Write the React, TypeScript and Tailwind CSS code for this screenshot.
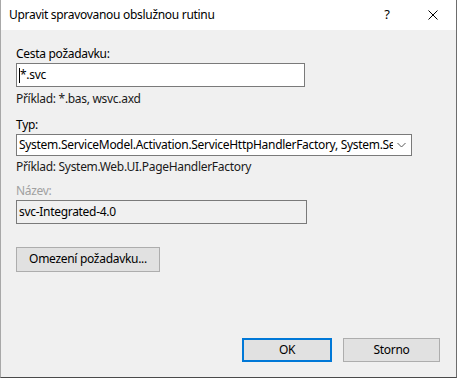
import React from 'react';

const font = { fontFamily: '"Noto Sans", "Open Sans", sans-serif' };

const Label: React.FC<{ text: string; muted?: boolean }> = ({ text, muted }) => (
  <div className={`h-[15px] leading-[15px] ${muted ? 'text-[#a0a0a0]' : 'text-black'}`}>{text}</div>
);

const App: React.FC = () => {
  return (
    <div
      className="w-[457px] h-[378px] flex flex-col bg-[#f0f0f0] border-l border-r border-b border-l-[#a8a8a8] border-r-[#6d6d6d] border-b-[#4a4a4a] text-[12px] tracking-[-0.3px] overflow-hidden"
      style={font}
    >
      {/* title bar */}
      <div className="h-[30px] bg-white flex items-center shrink-0">
        <div className="pl-[8px] pb-[1px] flex-1 text-[12px] text-black">Upravit spravovanou obslužnou rutinu</div>
        <div className="w-[46px] text-center text-[13px] text-black ml-[3px]">?</div>
        <div className="w-[46px] flex justify-center items-center">
          <svg width="10" height="10" viewBox="0 0 10 10">
            <path d="M0.5 0.5 L9.5 9.5 M9.5 0.5 L0.5 9.5" stroke="#000" strokeWidth="1" />
          </svg>
        </div>
      </div>

      {/* body */}
      <div className="flex-1 flex flex-col pl-[15px] pr-[15px] pt-[16px]">
        <Label text="Cesta požadavku:" />
        <div className="mt-[2px] w-[289px] h-[24px] bg-white border border-[#7a7a7a] flex items-center pl-[2px]">
          <span className="w-px h-[15px] bg-black" />
          <span>*.svc</span>
        </div>
        <div className="mt-[4px] h-[15px] leading-[15px] text-[#1a1a1a]">Příklad: *.bas, wsvc.axd</div>

        <div className="mt-[11px]">
          <Label text="Typ:" />
        </div>
        <div className="mt-[2px] w-[396px] h-[22px] bg-white border border-[#7a7a7a] flex items-center pl-[2px]">
          <span className="flex-1 whitespace-nowrap overflow-hidden">
            System.ServiceModel.Activation.ServiceHttpHandlerFactory, System.Se
          </span>
          <svg width="18" height="10" viewBox="0 0 18 10" className="shrink-0">
            <path d="M4.5 3 L8.5 7 L12.5 3" stroke="#5a5a5a" strokeWidth="1" fill="none" />
          </svg>
        </div>
        <div className="mt-[3px] h-[15px] leading-[15px] text-[#1a1a1a]">Příklad: System.Web.UI.PageHandlerFactory</div>

        <div className="mt-[9px]">
          <Label text="Název:" muted />
        </div>
        <div className="mt-[2px] w-[291px] h-[24px] border border-[#7a7a7a] flex items-center pl-[2px] text-black">
          svc-Integrated-4.0
        </div>

        <button className="mt-[23px] w-[144px] h-[25px] bg-[#e1e1e1] border border-[#adadad] text-black text-[12px] pb-[1px]">
          Omezení požadavku...
        </button>

        <div className="mt-auto mb-[15px] flex justify-end gap-[11px] pr-[1px]">
          <button className="w-[90px] h-[24px] bg-[#e1e1e1] border-2 border-[#0078d7] text-black text-[12px]">
            OK
          </button>
          <button className="w-[97px] h-[24px] bg-[#e1e1e1] border border-[#adadad] text-black text-[12px]">
            Storno
          </button>
        </div>
      </div>
    </div>
  );
};

export default App;
